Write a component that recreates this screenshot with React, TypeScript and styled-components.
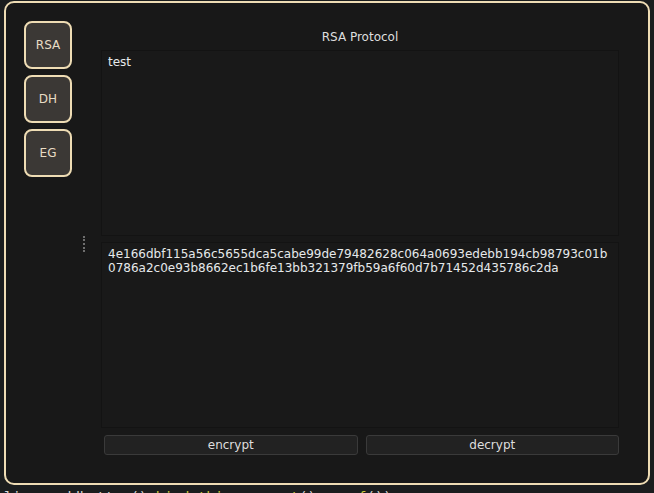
import * as React from 'react'
import styled, { createGlobalStyle } from 'styled-components'

const GlobalStyles = createGlobalStyle`
  html, body {
    margin: 0;
    padding: 0;
    height: 100%;
    overflow: hidden;
    background: #1b1d1e;
  }
  body {
    font-family: "DejaVu Sans", sans-serif;
    font-size: 12px;
  }
`

const Page = styled.div`
  box-sizing: border-box;
  height: 493px;
  padding: 1px 4px 0;
`

const Window = styled.div`
  box-sizing: border-box;
  width: 646px;
  height: 484px;
  border: 2px solid #eedcb4;
  border-radius: 10px;
  background: #181818;
  display: grid;
  grid-template-columns: 72px 1fr;
`

const Sidebar = styled.nav`
  display: flex;
  flex-direction: column;
  gap: 6px;
  padding: 18px 0 0 18px;
`

const ProtocolButton = styled.button`
  box-sizing: border-box;
  width: 48px;
  height: 48px;
  border: 2px solid #eedcb4;
  border-radius: 8px;
  background: #3b3835;
  color: #e8dcc4;
  font-family: "DejaVu Sans", sans-serif;
  font-size: 12px;
  padding: 0;
`

const Main = styled.main`
  display: grid;
  grid-template-columns: 23px 1fr;
  grid-template-rows: 41px 186px 186px auto;
  row-gap: 6px;
  padding-right: 29px;
`

const Title = styled.h1`
  grid-column: 2;
  margin: 0;
  padding-top: 27px;
  text-align: center;
  font-size: 12px;
  font-weight: normal;
  line-height: 14px;
  color: #dedede;
`

const Handle = styled.span`
  grid-column: 1;
  justify-self: start;
  margin: -6px 0 0 5px;
  width: 0;
  height: 16px;
  border-left: 2px dotted #6e6e6e;
`

const TextPane = styled.div`
  grid-column: 2;
  box-sizing: border-box;
  border: 1px solid #131313;
  background: #191919;
  padding: 4px 6px;
  color: #e6e9eb;
  line-height: 14px;
  white-space: pre-line;
`

const Actions = styled.div`
  grid-column: 2;
  margin-top: 1px;
  padding-left: 3px;
  display: grid;
  grid-template-columns: 1fr 1fr;
  gap: 8px;
  align-self: start;
`

const ActionButton = styled.button`
  box-sizing: border-box;
  height: 20px;
  border: 1px solid #3a3a3a;
  border-radius: 3px;
  background: #222222;
  color: #dedede;
  font-family: "DejaVu Sans", sans-serif;
  font-size: 12px;
  padding: 0;
`

const CodeLine = styled.div`
  padding-top: 4px;
  font-family: "DejaVu Sans Mono", monospace;
  font-size: 14px;
  line-height: 17px;
  white-space: pre;
  color: #d6d6d6;
`

const Yellow = styled.span`
  color: #c9c63a;
`

const App: React.FC = () => {
  const cipher = '4e166dbf115a56c5655dca5cabe99de79482628c064a0693edebb194cb98793c01b\n0786a2c0e93b8662ec1b6fe13bb321379fb59a6f60d7b71452d435786c2da'

  return (
    <Page>
      <GlobalStyles />
      <Window>
        <Sidebar>
          <ProtocolButton>RSA</ProtocolButton>
          <ProtocolButton>DH</ProtocolButton>
          <ProtocolButton>EG</ProtocolButton>
        </Sidebar>
        <Main>
          <Title>RSA Protocol</Title>
          <TextPane>test</TextPane>
          <Handle />
          <TextPane>{ cipher }</TextPane>
          <Actions>
            <ActionButton>encrypt</ActionButton>
            <ActionButton>decrypt</ActionButton>
          </Actions>
        </Main>
      </Window>
      <CodeLine>
        { 'lines.addbutton() ' }<Yellow>bind_this.encrypt</Yellow>{ '(), ar ' }<Yellow>f</Yellow>{ '());' }
      </CodeLine>
    </Page>
  )
}

export default App
